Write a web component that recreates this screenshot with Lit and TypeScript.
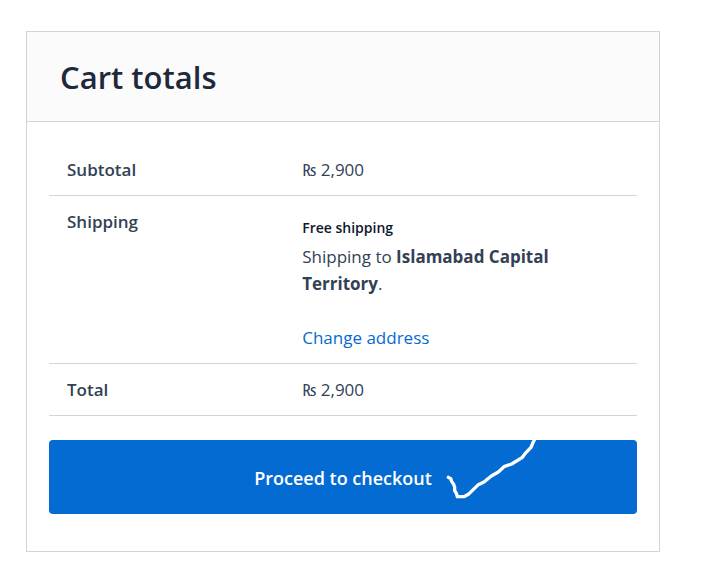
import { LitElement, html, css } from "lit";
import { customElement, property } from "lit/decorators.js";

@customElement("app-root")
export class AppRoot extends LitElement {
  @property() amount = "₨ 2,900";

  static styles = css`
    :host {
      display: block;
      padding: 31px 48px 24px 26px;
      background: #ffffff;
      color: #334155;
      font-family: "Segoe UI", "Open Sans", "Noto Sans", sans-serif;
      font-size: 17px;
      line-height: 27px;
    }
    .card {
      border: 1px solid #d1d5db;
    }
    .title {
      margin: 0;
      padding: 25px 33px 24px;
      border-bottom: 1px solid #d1d5db;
      background: #fbfbfb;
      color: #1e293b;
      font-size: 31px;
      font-weight: 600;
      line-height: 40px;
    }
    .content {
      padding: 22px 22px 37px;
    }
    .totals {
      width: 100%;
      table-layout: fixed;
      border-collapse: separate;
      border-spacing: 0;
    }
    .label,
    .value {
      padding: 12px 18px;
      border-bottom: 1px solid #d1d5db;
      text-align: left;
      vertical-align: top;
    }
    .label {
      width: 40%;
      box-sizing: border-box;
      font-weight: 600;
    }
    .methods {
      margin: 0;
      padding: 8px 0 3px;
      list-style: none;
      color: #0f172a;
      font-size: 14px;
      font-weight: 600;
      line-height: 24px;
    }
    .destination {
      max-width: 264px;
      margin: 0 0 27px;
    }
    .destination strong {
      font-weight: 700;
    }
    .change {
      display: block;
      color: #046bd2;
      text-decoration: none;
    }
    .action {
      position: relative;
      margin-top: 24px;
    }
    .checkout {
      display: block;
      width: 100%;
      padding: 25px 24px 23px;
      border: 0;
      border-radius: 4px;
      background: #046bd2;
      color: #ffffff;
      font: inherit;
      font-size: 18px;
      font-weight: 600;
      line-height: 26px;
      cursor: pointer;
    }
    .tick {
      position: absolute;
      top: 0;
      left: calc(50% + 87px);
      width: 120px;
      height: 74px;
      pointer-events: none;
    }
  `;

  render() {
    return html`
      <section class="card">
        <h2 class="title">Cart totals</h2>
        <div class="content">
          <table class="totals">
            <tbody>
              <tr>
                <th class="label" scope="row">Subtotal</th>
                <td class="value">${this.amount}</td>
              </tr>
              <tr>
                <th class="label" scope="row">Shipping</th>
                <td class="value">
                  <ul class="methods">
                    <li>Free shipping</li>
                  </ul>
                  <p class="destination">
                    Shipping to <strong>Islamabad Capital Territory</strong>.
                  </p>
                  <a class="change" href="#address">Change address</a>
                </td>
              </tr>
              <tr>
                <th class="label" scope="row">Total</th>
                <td class="value">${this.amount}</td>
              </tr>
            </tbody>
          </table>
          <div class="action">
            <button class="checkout" type="button">Proceed to checkout</button>
            <svg class="tick" viewBox="0 30 360 222" aria-hidden="true">
              <path
                d="M55 142L62 146L65 154L71 163L74 172V182L79 190L82 200H102L115 193L145 164L162 156L184 138L205 126L222 110L245 102L276 83L285 71L303 52L308 40L314 28"
                fill="none"
                stroke="#ffffff"
                stroke-width="10"
                stroke-linecap="round"
                stroke-linejoin="round"
              />
            </svg>
          </div>
        </div>
      </section>
    `;
  }
}
